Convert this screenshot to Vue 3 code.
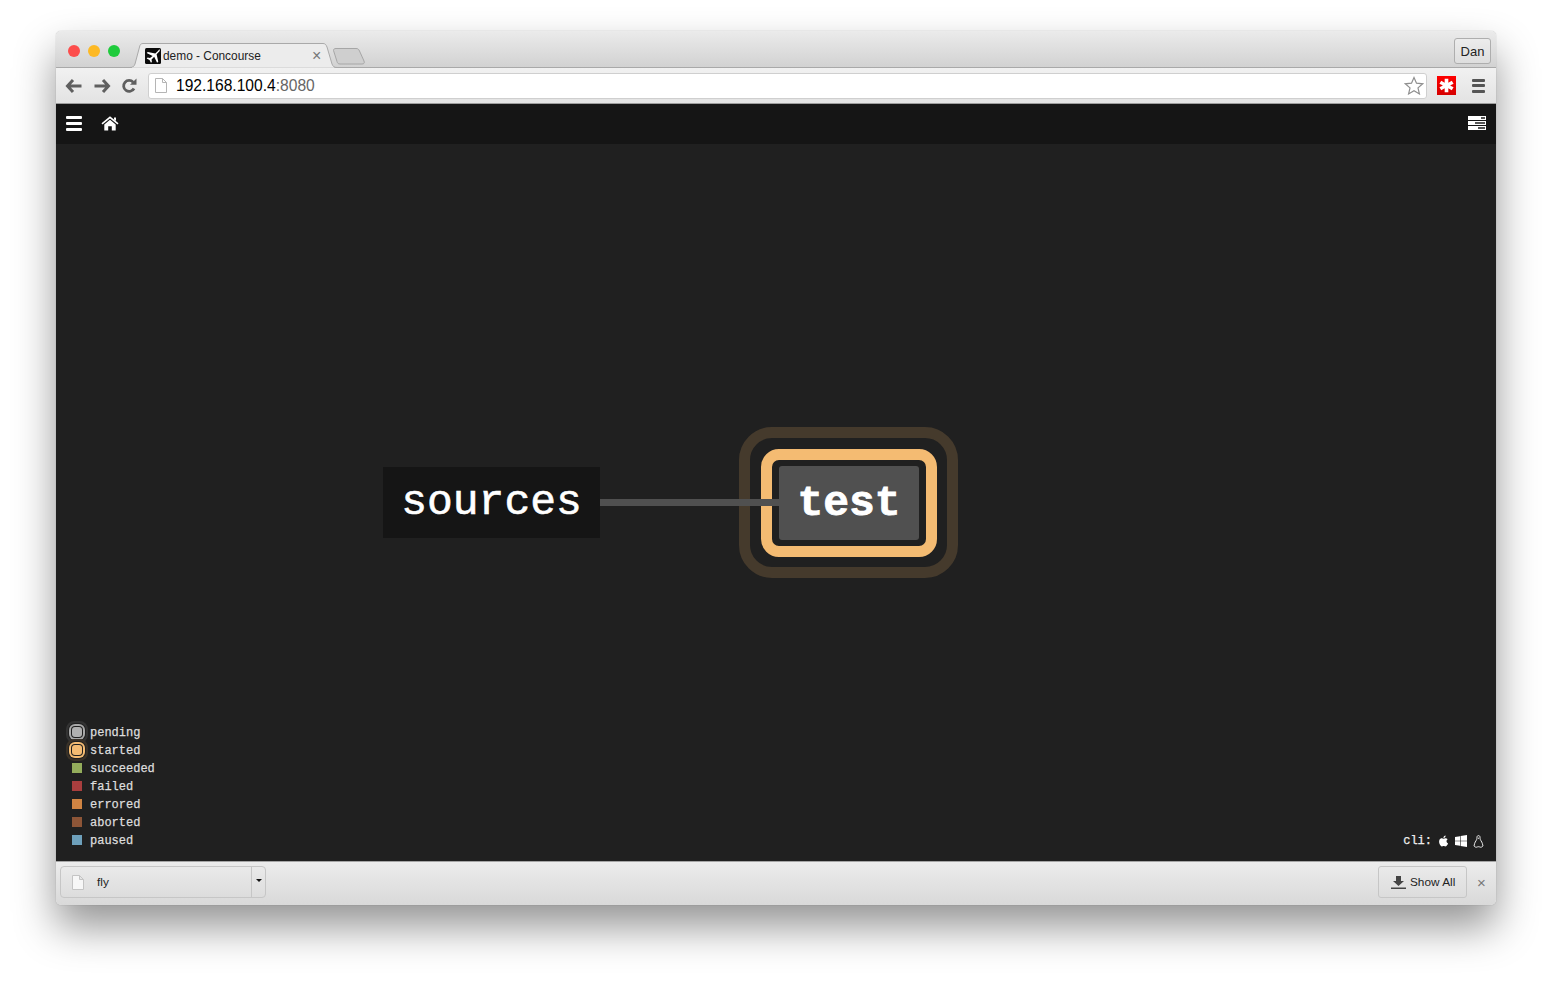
<script setup>
const legend = [
  { name: 'pending', cls: 'pending', ring: true },
  { name: 'started', cls: 'started', ring: true },
  { name: 'succeeded', cls: 'succeeded' },
  { name: 'failed', cls: 'failed' },
  { name: 'errored', cls: 'errored' },
  { name: 'aborted', cls: 'aborted' },
  { name: 'paused', cls: 'paused' },
]
</script>

<template>
  <div class="page">
    <div class="window">
      <header class="titlebar">
        <div class="lights">
          <span class="light red"></span>
          <span class="light yellow"></span>
          <span class="light green"></span>
        </div>
        <div class="tab">
          <svg class="tab-bg" width="208" height="25" viewBox="0 0 208 25">
            <path d="M0 24.500H1C4 24.500 5 23.500 6 21L10.500 4C11 1.500 12 .5 14 .5H194C196 .5 197 1.500 198 4L203 21C204 23.500 205 24.500 208 24.500" fill="#ececec" stroke="#a9a9a9" />
            <path d="M3 25H205" stroke="#ececec" stroke-width="1" />
          </svg>
          <svg class="favicon" width="16" height="16" viewBox="0 0 16 16">
            <rect width="16" height="16" rx="1.500" fill="#0b0b0b" />
            <path transform="translate(8 8) scale(1.200) translate(-8 -8)" d="M13.200 2.300c.8.500.5 1.500-.2 2.200L11 6.500l1.400 6.200-1 1-2.400-5-2.200 2.200.3 2-.8.800-1.200-2.400-2.400-1.200.8-.8 2 .3L7.700 8 2.700 5.600l1-1 6.200 1.400 2-2c.500-.5 1-1.300 1.300-1.700z" fill="#fff" />
          </svg>
          <span class="tab-title">demo - Concourse</span>
          <span class="tab-close">×</span>
        </div>
        <svg class="newtab" width="34" height="17" viewBox="0 0 34 17">
          <path d="M1.500 2.500C1.500 1 2.500.5 4 .5H24C26 .5 26.500 1 27.500 3L32 13C32.800 15 32 16 30 16H8C6 16 5.500 15 5 13.500Z" fill="#cfcfcf" stroke="#a6a6a6" />
        </svg>
        <div class="grow"></div>
        <div class="user">Dan</div>
      </header>

      <div class="toolbar">
        <svg class="nav-icon" width="18" height="16" viewBox="0 0 18 16">
          <path d="M8 2L2.500 8 8 14M3 8H16.500" fill="none" stroke="#5f5f5f" stroke-width="3" />
        </svg>
        <svg class="nav-icon" width="18" height="16" viewBox="0 0 18 16">
          <path d="M10 2l5.500 6L10 14M15 8H1.500" fill="none" stroke="#5f5f5f" stroke-width="3" />
        </svg>
        <svg class="nav-icon" width="16" height="16" viewBox="0 0 16 16">
          <path d="M13 10.500A5.500 5.500 0 1 1 12.200 4.200" fill="none" stroke="#5f5f5f" stroke-width="2.800" />
          <path d="M9 6.800H15.500V.5Z" fill="#5f5f5f" />
        </svg>
        <div class="omnibox">
          <svg width="12" height="15" viewBox="0 0 12 15">
            <path d="M.5.5H7.500L11.500 4.500V14.500H.5ZM7.500.5V4.500H11.500" fill="#fff" stroke="#b5b5b5" />
          </svg>
          <span class="url">192.168.100.4<span class="port">:8080</span></span>
          <div class="grow"></div>
          <svg width="20" height="19" viewBox="0 0 20 19">
            <path d="M10 1.500l2.500 5.700 6.200.6-4.700 4.100 1.400 6-5.400-3.200-5.400 3.200 1.400-6L1.300 7.800l6.200-.6z" fill="#fff" stroke="#8f8f8f" stroke-width="1.200" />
          </svg>
        </div>
        <div class="lastpass">
          <svg width="15" height="15" viewBox="0 0 14 14">
            <path d="M5.300.8H8.700V4.400L11.900 2.500 13.600 5.300 10.300 7 13.600 8.700 11.900 11.500 8.700 9.600V13.200H5.300V9.600L2.100 11.500.4 8.700 3.700 7 .4 5.300 2.100 2.500 5.300 4.400Z" fill="#fff" />
          </svg>
        </div>
        <div class="chrome-menu"><i></i><i></i><i></i></div>
      </div>

      <nav class="navbar">
        <div class="burger"><i></i><i></i><i></i></div>
        <svg class="home" width="18" height="15" viewBox="0 0 18 15">
          <path d="M1 7.800L9 1.300l8 6.500" fill="none" stroke="#fff" stroke-width="1.600" />
          <path d="M13 1.500h2V5l-2-1.500z" fill="#fff" />
          <path d="M9 3.700l-5.700 4.700V14.500H7.200V10.300H10.800V14.500H14.700V8.400z" fill="#fff" />
        </svg>
        <div class="grow"></div>
        <div class="servers">
          <div class="srv"><b class="s1"></b></div>
          <div class="srv"><b class="s2"></b></div>
          <div class="srv"><b class="s3"></b></div>
        </div>
      </nav>

      <main class="canvas">
        <div class="node sources">sources</div>
        <div class="ring-outer"></div>
        <div class="ring-inner"></div>
        <div class="edge"></div>
        <div class="node test">test</div>

        <ul class="legend">
          <li v-for="item in legend" :key="item.name" class="legend-row">
            <span class="swatch-box">
              <span class="swatch" :class="[item.cls, { ringed: item.ring }]"></span>
            </span>
            <span class="legend-label">{{ item.name }}</span>
          </li>
        </ul>

        <div class="cli">
          <span>cli:</span>
          <svg width="11" height="12" viewBox="3 1 18 22">
            <path d="M18.700 19.500c-.8 1.200-1.700 2.400-3 2.400-1.300 0-1.800-.8-3.300-.8-1.500 0-2 .8-3.300.8-1.300.1-2.300-1.300-3.100-2.500C4.300 17 3 12.500 4.700 9.500c.9-1.500 2.400-2.400 4.100-2.500 1.300 0 2.500.9 3.300.9.800 0 2.200-1.100 3.800-.9.600 0 2.500.2 3.600 1.900-3 2-2.600 6.300.8 7.600-.4 1.100-.9 2.200-1.600 3zM13 3.500c.7-.8 1.900-1.500 2.900-1.500.1 1.200-.3 2.400-1 3.200-.7.900-1.900 1.500-3 1.400-.2-1.100.4-2.400 1.100-3.100z" fill="#fff" />
          </svg>
          <svg width="12" height="12" viewBox="0 0 12 12">
            <path d="M0 1.900L5 1.200V5.700H0ZM5.600 1.100L12 0V5.700H5.600ZM0 6.300H5V10.800L0 10.100ZM5.600 6.300H12V12L5.600 11Z" fill="#fff" />
          </svg>
          <svg width="11" height="13" viewBox="0 0 11 13">
            <path d="M5.500.6C4 .6 3.900 2 3.900 3.500 3.900 5 2.200 6.500 1.700 8.300 1.300 9.600 1.200 10.600 1 11c.8.800 1.700 1.400 2.600 1.200.6-.2 1.100-.5 1.900-.5s1.300.3 1.900.5c.9.200 1.800-.4 2.600-1.200-.2-.4-.3-1.400-.7-2.700C8.800 6.500 7.100 5 7.100 3.500 7.100 2 7 .6 5.500.6z" fill="#202020" stroke="#fff" stroke-width=".9" />
            <path d="M4.500 2.800h2L5.500 4z" fill="#fff" />
          </svg>
        </div>
      </main>

      <footer class="downloads">
        <div class="dl-item">
          <div class="dl-main">
            <svg width="12" height="15" viewBox="0 0 12 15">
              <path d="M.5.5H7.500L11.500 4.500V14.500H.5ZM7.500.5V4.500H11.500" fill="#f7f7f7" stroke="#c4c4c4" />
            </svg>
            <span>fly</span>
          </div>
          <div class="dl-arrow"><i></i></div>
        </div>
        <div class="grow"></div>
        <div class="show-all">
          <svg width="15" height="13" viewBox="0 0 15 13">
            <path d="M5 0H10V5H13L7.500 10 2 5H5ZM0 11.500H15V13H0Z" fill="#444" />
          </svg>
          <span>Show All</span>
        </div>
        <span class="dl-close">×</span>
      </footer>
    </div>
  </div>
</template>

<style>
html, body { margin: 0; background: #fff; }
</style>

<style scoped>
.page {
  width: 1552px;
  height: 985px;
  padding: 31px 56px 0;
  box-sizing: border-box;
  overflow: hidden;
  background: #fff;
  font-family: "Liberation Sans", Arial, sans-serif;
}
.window {
  width: 1440px;
  height: 874px;
  display: flex;
  flex-direction: column;
  border-radius: 5px;
  box-shadow: 0 22px 42px rgba(0, 0, 0, .42), 0 0 1px rgba(0, 0, 0, .4);
  overflow: hidden;
}
.grow { flex: 1; }

.titlebar {
  height: 37px;
  flex: none;
  display: flex;
  align-items: flex-end;
  box-sizing: border-box;
  border-bottom: 1px solid #a9a9a9;
  background: linear-gradient(#ebebeb, #d2d2d2);
}
.lights {
  display: flex;
  gap: 8px;
  margin: 0 9px 10px 12px;
}
.light { width: 12px; height: 12px; border-radius: 50%; }
.red { background: #fc4d4c; }
.yellow { background: #fdb924; }
.green { background: #1fcb3c; }
.tab {
  position: relative;
  width: 208px;
  height: 25px;
  margin-bottom: -1px;
  display: flex;
  align-items: center;
  padding-left: 16px;
  box-sizing: border-box;
  font-size: 11.900px;
  color: #222;
  flex: none;
}
.tab-bg { position: absolute; left: 0; top: 0; }
.favicon { position: relative; flex: none; }
.tab-title { position: relative; margin-left: 2px; padding-top: 1px; }
.tab-close {
  position: absolute;
  left: 183px;
  top: 4px;
  color: #777;
  font-size: 16px;
  line-height: 18px;
}
.newtab { margin: 0 0 2px -5px; flex: none; }
.user {
  width: 37px;
  height: 26px;
  margin: 0 5px 3px 0;
  box-sizing: border-box;
  border: 1px solid #aeaeae;
  border-radius: 3px;
  font-size: 13px;
  line-height: 26px;
  text-align: center;
  color: #222;
  background: linear-gradient(#ececec, #dedede);
}

.toolbar {
  height: 36px;
  flex: none;
  display: flex;
  align-items: center;
  box-sizing: border-box;
  padding: 0 9px 0 9px;
  border-bottom: 1px solid #9d9d9d;
  background: linear-gradient(#f1f1f1, #e3e3e3);
}
.nav-icon { margin-right: 10px; flex: none; }
.nav-icon + .nav-icon + .nav-icon { margin: 0 11px 0 0; }
.omnibox {
  width: 1279px;
  height: 26px;
  display: flex;
  align-items: center;
  box-sizing: border-box;
  padding: 0 2px 0 6px;
  border: 1px solid #cfcfcf;
  border-radius: 3px;
  background: #fff;
}
.url { margin-left: 9px; font-size: 15.600px; color: #000; }
.port { color: #666; }
.lastpass {
  width: 19px;
  height: 19px;
  margin-left: 10px;
  display: flex;
  align-items: center;
  justify-content: center;
  background: linear-gradient(#f00, #d50000);
  flex: none;
}
.chrome-menu {
  width: 13px;
  margin-left: 16px;
  display: flex;
  flex-direction: column;
  gap: 2.500px;
  flex: none;
}
.chrome-menu i { height: 3px; background: #555; border-radius: 1px; display: block; }

.navbar {
  height: 40px;
  flex: none;
  display: flex;
  align-items: center;
  box-sizing: border-box;
  padding: 0 10px 2px;
  background: #151515;
}
.burger {
  width: 16px;
  display: flex;
  flex-direction: column;
  gap: 3px;
}
.burger i { height: 3px; background: #fff; border-radius: 1px; display: block; }
.home { margin-left: 19px; }
.servers {
  width: 18px;
  display: flex;
  flex-direction: column;
  gap: 1px;
}
.srv {
  height: 4px;
  background: #fff;
  position: relative;
}
.srv b { position: absolute; top: 1px; height: 2px; background: #555; }
.s1 { left: 13px; width: 4px; }
.s2 { left: 7px; width: 10px; }
.s3 { left: 10px; width: 7px; }

.canvas {
  position: relative;
  flex: 1;
  background: #202020;
  color: #fff;
  font-family: "Liberation Mono", "Courier New", monospace;
}
.edge {
  position: absolute;
  left: 544px;
  top: 355px;
  width: 180px;
  height: 7px;
  background: #505050;
}
.node {
  position: absolute;
  display: flex;
  align-items: center;
  justify-content: center;
  font-size: 43px;
  line-height: 1;
  color: #fff;
}
.sources {
  left: 327px;
  top: 323px;
  width: 217px;
  height: 71px;
  background: #151515;
  -webkit-text-stroke: .6px #fff;
}
.test {
  left: 723px;
  top: 322px;
  width: 140px;
  height: 74px;
  border-radius: 3px;
  background: #505050;
  font-weight: bold;
  -webkit-text-stroke: .8px #fff;
}
.ring-outer {
  position: absolute;
  left: 683px;
  top: 283px;
  width: 219px;
  height: 151px;
  box-sizing: border-box;
  border: 11px solid #453a2c;
  border-radius: 33px;
}
.ring-inner {
  position: absolute;
  left: 705px;
  top: 305px;
  width: 176px;
  height: 108px;
  box-sizing: border-box;
  border: 11px solid #f4bb72;
  border-radius: 18px;
}

.legend {
  position: absolute;
  left: 11px;
  bottom: 12px;
  margin: 0;
  padding: 0;
  list-style: none;
  font-size: 12px;
  color: #ddd;
}
.legend-row {
  height: 18px;
  display: flex;
  align-items: center;
  gap: 3px;
}
.legend-label {
  padding-top: 2px;
  -webkit-text-stroke: .25px #ddd;
}
.swatch-box {
  width: 20px;
  height: 18px;
  display: flex;
  align-items: center;
  justify-content: center;
}
.swatch { width: 10px; height: 10px; display: block; box-sizing: content-box; }
.ringed {
  border-radius: 3px;
  box-shadow: 0 0 0 1px #202020, 0 0 0 3px var(--ring), 0 0 0 4px #202020, 0 0 0 6px var(--halo);
}
.pending { background: #b0b0b0; --ring: #a8a8a8; --halo: #333; }
.started { background: #f4bb72; --ring: #f4bb72; --halo: #3a3228; }
.succeeded { background: #93ac5b; }
.failed { background: #a83e3e; }
.errored { background: #d08443; }
.aborted { background: #8d5537; }
.paused { background: #6ea0bb; }

.cli {
  position: absolute;
  right: 12px;
  bottom: 13px;
  display: flex;
  align-items: center;
  gap: 6px;
  font-size: 12px;
  color: #eee;
  -webkit-text-stroke: .25px #eee;
}

.downloads {
  height: 44px;
  flex: none;
  display: flex;
  align-items: center;
  box-sizing: border-box;
  padding: 4px 10px 7px 4px;
  border-top: 1px solid #a5a5a5;
  background: linear-gradient(#ececec, #d9d9d9);
  font-size: 11.800px;
  color: #222;
}
.dl-item {
  width: 206px;
  height: 32px;
  display: flex;
  box-sizing: border-box;
  border: 1px solid #c6c6c6;
  border-radius: 4px;
}
.dl-main {
  flex: 1;
  display: flex;
  align-items: center;
  gap: 13px;
  padding-left: 11px;
  border-right: 1px solid #c6c6c6;
}
.dl-arrow {
  width: 13px;
  display: flex;
  align-items: center;
  justify-content: center;
}
.dl-arrow i {
  width: 0;
  height: 0;
  margin-bottom: 3px;
  border: 3px solid transparent;
  border-top: 3px solid #111;
  border-bottom: 0;
  display: block;
}
.show-all {
  width: 89px;
  height: 32px;
  display: flex;
  align-items: center;
  gap: 4px;
  padding-left: 12px;
  box-sizing: border-box;
  border: 1px solid #c6c6c6;
  border-radius: 3px;
}
.dl-close {
  width: 29px;
  margin-right: -10px;
  text-align: center;
  color: #777;
  font-size: 15px;
}
</style>
